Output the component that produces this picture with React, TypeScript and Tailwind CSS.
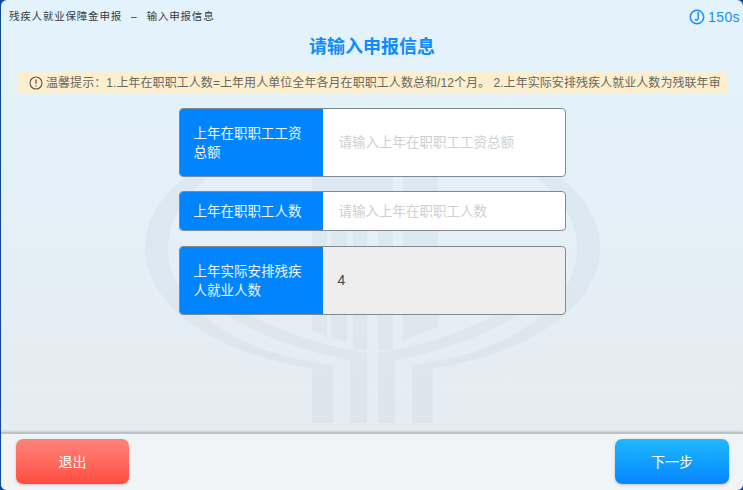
const CJK = "font-['Liberation_Sans','Noto_Sans_CJK_SC',sans-serif]"

function Watermark() {
  return (
    <svg
      className="absolute left-[-1px] top-0"
      width="743"
      height="432"
      viewBox="0 0 743 432"
      fill="#5f7f95"
    >
      <g opacity="0.055">
        {/* outer ring running down into the two side legs */}
        <path d="M145 248A227 125 0 0 1 600 248A227 125 0 0 1 433 368.5V423H412V365A204 118 0 0 0 577 248A204 118 0 0 0 168 248A204 118 0 0 0 333 365V423H312V368.5A227 125 0 0 1 145 248Z" />
        {/* inner bowl and the two middle legs */}
        <path d="M225 300Q285 340 367 353V423H350V360Q265 345 205 300Z" />
        <path d="M520 300Q460 340 378 353V423H395V360Q480 345 540 300Z" />
        {/* upper pillars */}
        <path d="M312 165H393V195H312Z" />
        <path d="M403 165H438V195H403Z" />
        <path d="M312 195H327V337L312 330Z" />
        <path d="M331 195H347V343L331 336Z" />
        <path d="M353 195H367V350H353Z" />
        <path d="M378 195H393V350H378Z" />
        <path d="M403 195H438V327L403 340Z" />
      </g>
    </svg>
  )
}

function ClockIcon() {
  return (
    <svg width="16" height="16" viewBox="0 0 16 16" fill="none" stroke="#1c8df5" strokeWidth="1.5">
      <circle cx="8" cy="8" r="6.7" />
      <path d="M9.2 3.6v5.6c0 1.5-1.4 2-2.8 1.5" strokeLinecap="round" />
    </svg>
  )
}

function InfoIcon() {
  return (
    <svg width="14" height="14" viewBox="0 0 14 14" fill="none" stroke="#5c5445" strokeWidth="1.1">
      <circle cx="7" cy="7" r="6" />
      <path d="M7 3.4v4.4M7 9.4v1.2" strokeWidth="1.3" />
    </svg>
  )
}

function FormRow({
  label,
  value,
  placeholder,
  height,
  disabled,
}: {
  label: string
  value?: string
  placeholder?: string
  height: string
  disabled?: boolean
}) {
  return (
    <div
      className={`flex w-[387px] overflow-hidden rounded-[4px] border border-[#7f8a92] ${height} ${
        disabled ? "bg-[#eeeeee]" : "bg-white"
      }`}
    >
      <div className="flex w-[143px] shrink-0 items-center bg-[#0084ff] pl-[14px] pr-[10px] text-[13.5px] leading-[19px] text-[#eef7ff]">
        {label}
      </div>
      <div className="flex flex-1 items-center pl-[15px] text-[13.5px]">
        {value ? (
          <span className="text-[14px] text-[#444444]">{value}</span>
        ) : (
          <span className="pl-[1px] pt-[2px] text-[#cfcfcf]">{placeholder}</span>
        )}
      </div>
    </div>
  )
}

export default function App() {
  return (
    <div className={`h-[490px] w-[743px] overflow-hidden bg-[#0b4a9c] pl-[1px] ${CJK}`}>
      <div className="relative flex h-full w-full flex-col overflow-hidden rounded-[6px] bg-gradient-to-b from-[#e3f3fc] to-[#e6ebf0]">
        <Watermark />

        <div className="relative flex h-[35px] items-start justify-between pl-[8px] pr-[3px] pt-[9px]">
          <div className="flex text-[10.5px] leading-[15px] tracking-[0.8px] text-[#333a40]">
            <span>残疾人就业保障金申报</span>
            <span className="mx-[9px]">–</span>
            <span>输入申报信息</span>
          </div>
          <div className="flex items-center gap-[3px] text-[14px] leading-[16px] tracking-[0.4px] text-[#1c8df5]">
            <ClockIcon />
            <span>150s</span>
          </div>
        </div>

        <h1 className="relative text-center text-[18px] font-bold leading-[24px] text-[#0c8cff]">
          请输入申报信息
        </h1>

        <div className="relative ml-[17px] mt-[12px] flex h-[23px] w-[709px] items-center overflow-hidden whitespace-nowrap bg-[#fbefd0] pl-[11px] text-[12px] tracking-[0.06px] text-[#6b675c]">
          <InfoIcon />
          <span className="ml-[3px]">
            温馨提示：1.上年在职职工人数=上年用人单位全年各月在职职工人数总和/12个月。 2.上年实际安排残疾人就业人数为残联年审
          </span>
        </div>

        <div className="relative mt-[14px] flex flex-col items-center gap-[14px]">
          <FormRow label="上年在职职工工资总额" placeholder="请输入上年在职职工工资总额" height="h-[69px]" />
          <FormRow label="上年在职职工人数" placeholder="请输入上年在职职工人数" height="h-[40px]" />
          <div className="mt-[1px]">
            <FormRow label="上年实际安排残疾人就业人数" value="4" height="h-[69px]" disabled />
          </div>
        </div>

        <div className="absolute inset-x-0 bottom-0 flex h-[58px] items-start justify-between border-t-2 border-[#bcc3c8] bg-[#f1f4f7] pl-[15px] pr-[14px] pt-[5px] shadow-[0_-1px_2px_rgba(0,0,0,0.12)]">
          <button className="h-[45px] w-[113px] rounded-[7px] bg-gradient-to-b from-[#ff8379] to-[#ff4a40] pt-[1px] text-[14px] text-white shadow-[0_1px_3px_rgba(0,0,0,0.2)]">
            退出
          </button>
          <button className="h-[45px] w-[114px] rounded-[7px] bg-gradient-to-b from-[#22b8ff] to-[#0a85ff] pt-[1px] text-[14px] text-white shadow-[0_1px_3px_rgba(0,0,0,0.2)]">
            下一步
          </button>
        </div>
      </div>
    </div>
  )
}
